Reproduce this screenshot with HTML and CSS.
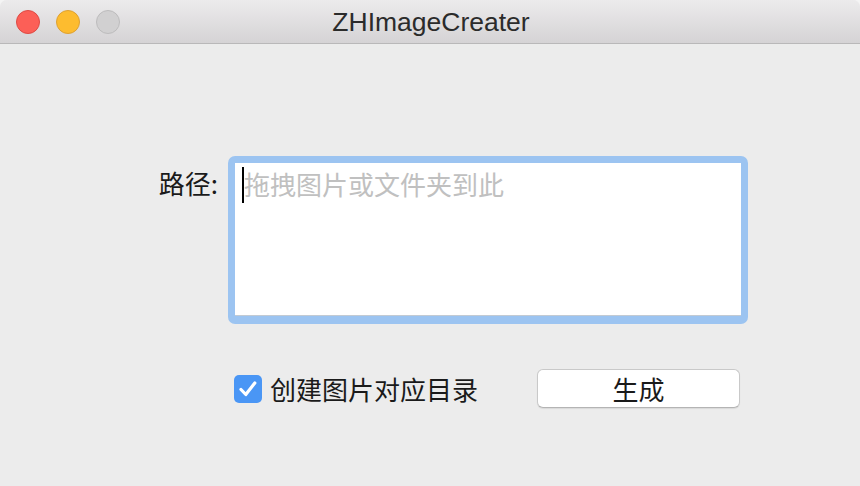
FILE: index.html
```html
<!DOCTYPE html>
<html lang="zh">
<head>
<meta charset="utf-8">
<title>ZHImageCreater</title>
<link rel="stylesheet" href="styles.css">
</head>
<body>
<div class="window">
  <div class="titlebar">
    <div class="lights">
      <span class="light red"></span>
      <span class="light yellow"></span>
      <span class="light grey"></span>
    </div>
    <div class="title">ZHImageCreater</div>
    <div></div>
  </div>
  <div class="content">
    <div class="form">
      <div class="label">路径:</div>
      <div class="ring">
        <div class="field">
          <span class="placeholder">拖拽图片或文件夹到此</span>
        </div>
      </div>
    </div>
    <div class="actions">
      <label class="check">
        <span class="box">
          <svg width="28" height="28" viewBox="0 0 28 28"><path d="M7 14.5 L11.8 19.5 L20.8 8" fill="none" stroke="#fff" stroke-width="3.2" stroke-linecap="round" stroke-linejoin="round"/></svg>
        </span>
        <span class="check-text">创建图片对应目录</span>
      </label>
      <button class="btn">生成</button>
    </div>
  </div>
</div>
</body>
</html>
```

FILE: styles.css
```css
html, body {
  margin: 0;
  padding: 0;
}
body {
  width: 860px;
  height: 486px;
  overflow: hidden;
  background: #f4f4f4;
  font-family: "Liberation Sans", "Noto Sans CJK SC", sans-serif;
}
.window {
  width: 860px;
  height: 486px;
  background: #ececec;
  border-radius: 7px 7px 0 0;
  overflow: hidden;
  display: flex;
  flex-direction: column;
}
.titlebar {
  height: 43px;
  border-bottom: 1px solid #b9b8b9;
  background: linear-gradient(#ecebec, #d5d3d5);
  display: grid;
  grid-template-columns: 1fr auto 1fr;
  align-items: center;
}
.lights {
  display: flex;
  gap: 16px;
  padding-left: 16px;
  padding-top: 1px;
}
.light {
  width: 22px;
  height: 22px;
  border-radius: 50%;
  border: 1px solid;
}
.red { background: #fc5f57; border-color: #de4a44; }
.yellow { background: #fdbc2f; border-color: #dea132; }
.grey { background: #d1d0d1; border-color: #bdbcbd; }
.title {
  font-size: 26.5px;
  line-height: 30px;
  color: #2b2b2b;
  padding-left: 2px;
}
.content {
  display: flex;
  flex-direction: column;
  padding-top: 112px;
}
.form {
  display: grid;
  grid-template-columns: 228px 520px;
}
.label {
  font-family: "Noto Sans CJK SC", sans-serif;
  font-size: 26px;
  line-height: 30px;
  color: #1a1a1a;
  text-align: right;
  padding-right: 10px;
  padding-top: 12px;
}
.ring {
  background: #9cc4f1;
  border-radius: 7px;
  padding: 7px 7px 8px 7px;
}
.field {
  position: relative;
  background: #fff;
  border-bottom: 1px solid #c2cad3;
  padding: 6px 0 0 9px;
  box-sizing: border-box;
  height: 153px;
}
.field::before {
  content: "";
  position: absolute;
  left: 7px;
  top: 4px;
  width: 2px;
  height: 36px;
  background: #000;
}
.placeholder {
  font-family: "Noto Sans CJK SC", sans-serif;
  font-size: 26px;
  line-height: 30px;
  color: #c0c0c0;
}
.actions {
  display: flex;
  align-items: center;
  padding-left: 234px;
  margin-top: 45px;
}
.check {
  display: flex;
  align-items: center;
  gap: 8px;
}
.box {
  width: 28px;
  height: 28px;
  border-radius: 5px;
  background: #4a96f5;
  display: block;
}
.box svg { display: block; }
.check-text {
  font-family: "Noto Sans CJK SC", sans-serif;
  font-size: 26px;
  line-height: 30px;
  color: #1a1a1a;
}
.btn {
  margin-left: 59px;
  width: 203px;
  height: 39px;
  background: #fff;
  border: 1px solid #c9c9c9;
  border-bottom-color: #b4b4b4;
  border-radius: 6px;
  box-shadow: 0 1px 1px rgba(0,0,0,0.08);
  font-family: "Noto Sans CJK SC", sans-serif;
  font-size: 26px;
  line-height: 30px;
  color: #1a1a1a;
  padding: 0;
}
```
